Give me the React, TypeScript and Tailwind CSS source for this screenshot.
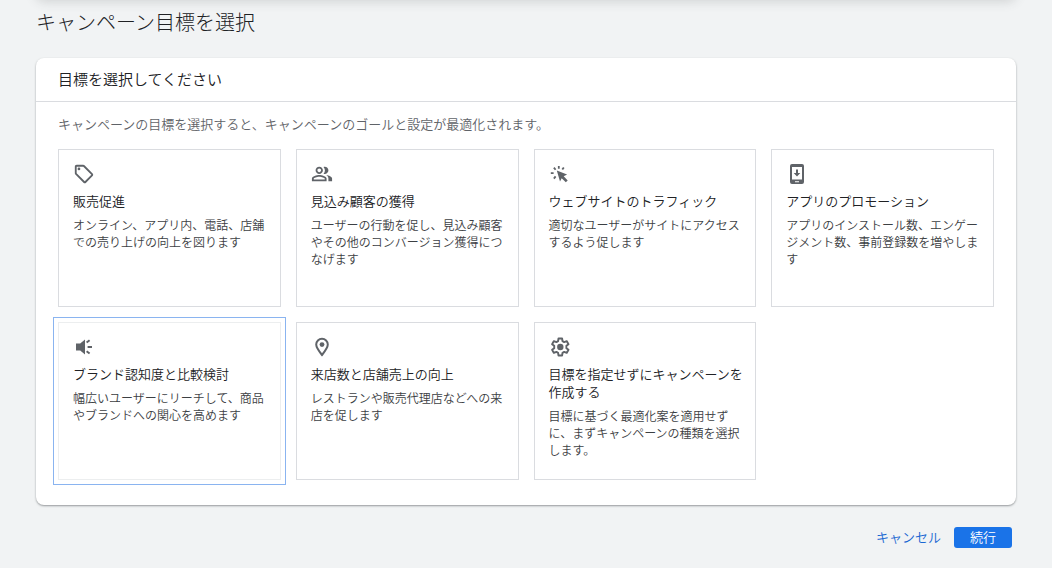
import React, { useState } from 'react';
import { MdOutlineSell, MdOutlinePeopleAlt } from 'react-icons/md';

interface Goal {
  id: string;
  title: string;
  description: string;
  icon: React.ReactNode;
}

// Arrow pointer with a burst of rays
const TrafficIcon = () => (
  <svg width="22" height="22" viewBox="0 0 22 22" fill="currentColor">
    <path d="M7.800 7.600l10.300 3.900-3.400 1.800 4 4.100-1.900 1.900-4.100-4-1.700 3.300z" />
    <path
      d="M9.800 3v2.800M14.800 4.400l-1.500 2.200M4.900 4.600l1.700 2.200M1.800 10.200h2.800M4.900 15.600l1.700-2.200"
      stroke="currentColor"
      strokeWidth="1.8"
      fill="none"
    />
  </svg>
);

// Phone with a download arrow
const AppIcon = () => (
  <svg width="22" height="22" viewBox="0 0 22 22" fill="currentColor">
    <path
      fillRule="evenodd"
      d="M6 1h10a2 2 0 0 1 2 2v16a2 2 0 0 1-2 2H6a2 2 0 0 1-2-2V3a2 2 0 0 1 2-2zm0 3v12.6h10V4zm3 14.2v1h4v-1z"
    />
    <path d="M10 6.5h2V10h2.3L11 13.6 7.7 10H10z" />
  </svg>
);

// Loudspeaker with three rays
const BrandIcon = () => (
  <svg width="22" height="22" viewBox="0 0 22 22" fill="currentColor">
    <path d="M3 7.6h4.2L12 3.6v14.8l-4.800-4H3z" />
    <path
      d="M13.6 6.6l3-2.4M14.6 11H19M13.6 15.2l3 2.4"
      stroke="currentColor"
      strokeWidth="1.9"
      fill="none"
    />
  </svg>
);

const StoreIcon = () => (
  <svg width="22" height="22" viewBox="0 0 22 22" fill="none" stroke="currentColor" strokeWidth="2">
    <path d="M11 19C7.4 14.6 5.2 11.4 5.2 8.6a5.8 5.8 0 0 1 11.6 0c0 2.8-2.2 6-5.8 10.4z" />
    <circle cx="11" cy="8.6" r="2.4" fill="currentColor" stroke="none" />
  </svg>
);

// Gear with a solid hub
const SettingsIcon = () => (
  <svg width="22" height="22" viewBox="0 0 22 22" fill="none" stroke="currentColor" strokeWidth="1.9">
    <path
      strokeLinejoin="round"
      d="M9.500 2.500h3.600l.4 2.600 1.700 1 2.500-1 1.800 3.100-2.100 1.600v2.400l2.100 1.600-1.800 3.100-2.500-1-1.700 1-.4 2.600H9.500l-.4-2.600-1.700-1-2.500 1-1.800-3.100 2.100-1.600V9.800L3.100 8.200l1.800-3.100 2.500 1 1.700-1z"
    />
    <circle cx="11.300" cy="11" r="3.200" fill="currentColor" stroke="none" />
  </svg>
);

const goals: Goal[] = [
  {
    id: 'sales',
    title: '販売促進',
    description: 'オンライン、アプリ内、電話、店舗での売り上げの向上を図ります',
    icon: <MdOutlineSell size={22} />,
  },
  {
    id: 'leads',
    title: '見込み顧客の獲得',
    description: 'ユーザーの行動を促し、見込み顧客やその他のコンバージョン獲得につなげます',
    icon: <MdOutlinePeopleAlt size={22} />,
  },
  {
    id: 'traffic',
    title: 'ウェブサイトのトラフィック',
    description: '適切なユーザーがサイトにアクセスするよう促します',
    icon: <TrafficIcon />,
  },
  {
    id: 'app',
    title: 'アプリのプロモーション',
    description: 'アプリのインストール数、エンゲージメント数、事前登録数を増やします',
    icon: <AppIcon />,
  },
  {
    id: 'brand',
    title: 'ブランド認知度と比較検討',
    description: '幅広いユーザーにリーチして、商品やブランドへの関心を高めます',
    icon: <BrandIcon />,
  },
  {
    id: 'store',
    title: '来店数と店舗売上の向上',
    description: 'レストランや販売代理店などへの来店を促します',
    icon: <StoreIcon />,
  },
  {
    id: 'none',
    title: '目標を指定せずにキャンペーンを作成する',
    description: '目標に基づく最適化案を適用せずに、まずキャンペーンの種類を選択します。',
    icon: <SettingsIcon />,
  },
];

const GoalCard: React.FC<{ goal: Goal; active: boolean; onSelect: () => void }> = ({
  goal,
  active,
  onSelect,
}) => (
  <button
    type="button"
    aria-pressed={active}
    onClick={onSelect}
    className={`flex min-h-[158px] flex-col items-start border pt-[13px] pr-3 pb-3 pl-[14px] text-left ${
      active
        ? 'border-[#eceeef] outline outline-offset-4 outline-[#8ab4f0]'
        : 'border-[#dadce0] outline-none'
    }`}
  >
    <span className="text-[#5f6368]">{goal.icon}</span>
    <span className="mt-[7px] text-[13px] leading-[18px] text-[#202124]">{goal.title}</span>
    <span className="mt-[6px] text-[12px] leading-[17px] text-[#3c4043]">{goal.description}</span>
  </button>
);

export default function App() {
  const [selected, setSelected] = useState('brand');

  return (
    <div
      lang="ja"
      className="min-h-screen overflow-hidden bg-[#f1f3f4] font-['Noto_Sans_CJK_JP',sans-serif] font-[350] text-[#202124]"
    >
      {/* Bottom edge of the previous step */}
      <div className="mx-9 -mt-4 h-4 rounded-lg bg-white shadow-[0_1px_12px_rgba(60,64,67,0.2)]" />

      <main className="px-9">
        <h1 className="mt-2 text-[20px] leading-7 font-light">キャンペーン目標を選択</h1>

        <section className="mt-[22px] rounded-lg bg-white shadow-[0_1px_2px_rgba(60,64,67,0.5)]">
          <h2 className="border-b border-[#dadce0] px-[22px] pt-[11px] pb-3 text-[15px] leading-5 font-[350]">
            目標を選択してください
          </h2>
          <div className="px-[22px] pt-3 pb-[25px]">
            <p className="text-[13px] leading-5 text-[#5f6368]">
              キャンペーンの目標を選択すると、キャンペーンのゴールと設定が最適化されます。
            </p>
            <div className="mt-[15px] grid grid-cols-[repeat(auto-fill,minmax(212px,1fr))] gap-[15px]">
              {goals.map((goal) => (
                <GoalCard
                  key={goal.id}
                  goal={goal}
                  active={goal.id === selected}
                  onSelect={() => setSelected(goal.id)}
                />
              ))}
            </div>
          </div>
        </section>

        <div className="mt-[22px] flex items-center justify-end gap-[13px] pr-1 pb-4 text-[13px] leading-[19px]">
          <button type="button" className="pb-[2px] text-[#1967d2]">
            キャンセル
          </button>
          <button type="button" className="rounded-[3px] bg-[#1a73e8] px-4 pb-[2px] text-white">
            続行
          </button>
        </div>
      </main>
    </div>
  );
}
